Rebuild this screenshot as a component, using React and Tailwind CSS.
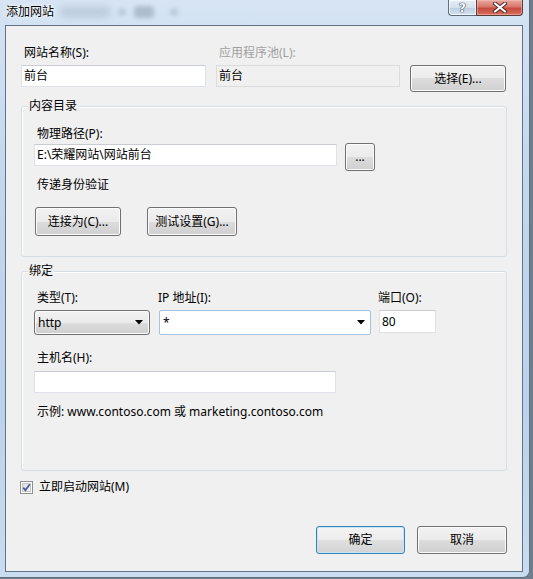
import React from "react";

function Btn({ className = "", children, primary = false }) {
  return (
    <button
      className={
        "flex items-center justify-center rounded-[3px] border text-[12px] leading-[16px] text-black " +
        (primary
          ? "border-[#3c7fb1] bg-[linear-gradient(#f4f4f4_0%,#ececec_50%,#e0e0e0_50%,#d3d3d3_100%)] shadow-[inset_0_0_0_1px_#bfe6fb] "
          : "border-[#707070] bg-[linear-gradient(#f2f2f2_0%,#ebebeb_50%,#dddddd_50%,#cfcfcf_100%)] shadow-[inset_0_0_0_1px_#fcfcfc] ") +
        className
      }
    >
      {children}
    </button>
  );
}

function Arrow() {
  return (
    <svg width="8" height="5" viewBox="0 0 8 5" className="shrink-0">
      <path d="M0 0 H8 L4 4.5 Z" fill="#000" />
    </svg>
  );
}

function Group({ title, className = "", children }) {
  return (
    <div
      className={
        "relative rounded-[3px] border border-[#d5dfe5] shadow-[inset_1px_1px_0_#ffffff] " + className
      }
    >
      <span className="absolute left-[6px] top-[-9px] bg-[#f0f0f0] px-[1px] leading-[16px]">{title}</span>
      {children}
    </div>
  );
}

const inputCls =
  "flex items-center border border-[#dfe2e8] border-t-[#c9ccd3] bg-white pl-[2px] leading-[16px]";

export default function App() {
  return (
    <div className="h-[579px] w-[533px] overflow-hidden bg-[#6f7d8c] font-['Noto_Sans','Noto_Sans_CJK_SC',sans-serif] text-[12px] leading-[16px] text-black">
      <div className="flex h-[578px] w-[530px] flex-col rounded-br-[6px] bg-[linear-gradient(180deg,#d6e4f3_0%,#c3d7ee_30%,#bcd2ea_70%,#c9dcf0_100%)] shadow-[inset_-1px_-1px_0_#5d6f84]">
        {/* Title bar */}
        <div className="relative flex h-[25px] items-start">
          <div className="pointer-events-none absolute left-[60px] top-[6px] h-[12px] w-[50px] rounded bg-[#9fb0c3] opacity-40 blur-[3px]" />
          <div className="pointer-events-none absolute left-[118px] top-[9px] h-[6px] w-[8px] rounded bg-[#8796a8] opacity-40 blur-[2px]" />
          <div className="pointer-events-none absolute left-[134px] top-[6px] h-[12px] w-[20px] rounded bg-[#8796a8] opacity-50 blur-[2px]" />
          <div className="pointer-events-none absolute left-[170px] top-[9px] h-[6px] w-[8px] rounded bg-[#8796a8] opacity-40 blur-[2px]" />
          <span className="relative pl-[6px] pt-[4px] text-[12px] leading-[16px] text-black [text-shadow:0_0_6px_#ffffff,0_0_3px_#ffffff]">
            添加网站
          </span>
          <div className="ml-auto mr-[7px] flex">
            <div className="flex h-[16px] w-[28px] items-center justify-center rounded-bl-[4px] border border-t-0 border-r-0 border-[#5e6d80] bg-[linear-gradient(180deg,#e7eef7_0%,#d3e0ee_50%,#bfd0e4_55%,#d4e2f0_100%)] shadow-[inset_0_0_0_1px_#ffffffaa]">
              <span className="font-['DejaVu_Sans',sans-serif] text-[12px] font-bold leading-[14px] text-white [text-shadow:0_0_1px_#2b3a4c,0_0_1px_#2b3a4c,0_0_1px_#2b3a4c]">
                ?
              </span>
            </div>
            <div className="flex h-[16px] w-[47px] items-center justify-center rounded-br-[4px] border border-t-0 border-[#5e3a36] bg-[linear-gradient(180deg,#e8a89e_0%,#d7776a_45%,#c6493c_55%,#d7705f_100%)] shadow-[inset_0_0_0_1px_#f3c2bb88]">
              <svg width="14" height="11" viewBox="0 0 14 11">
                <path d="M2 1.5 L12 9.5 M12 1.5 L2 9.5" stroke="#4a2a27" strokeWidth="4" strokeLinecap="round" />
                <path d="M2 1.5 L12 9.5 M12 1.5 L2 9.5" stroke="#ffffff" strokeWidth="2.2" strokeLinecap="round" />
              </svg>
            </div>
          </div>
        </div>

        {/* Client area */}
        <div className="ml-[5px] flex h-[547px] w-[518px] flex-col border border-[#61738a] bg-[#f0f0f0] pl-[15px] pr-[15px] pt-[19px]">
          {/* Row 1 */}
          <div className="flex gap-[10px]">
            <div className="w-[185px]">
              <div className="ml-[3px]">网站名称(S):</div>
              <div className={inputCls + " mt-[4px] h-[22px]"}>前台</div>
            </div>
            <div className="w-[184px]">
              <div className="ml-[3px] text-[#a0a0a0]">应用程序池(L):</div>
              <div className="mt-[4px] flex h-[22px] items-center border border-[#dcdcdc] bg-[#f0f0f0] pl-[2px]">
                前台
              </div>
            </div>
            <div className="w-[96px] pt-[20px]">
              <Btn className="h-[27px] w-[96px]">选择(E)...</Btn>
            </div>
          </div>

          {/* Group 1 */}
          <Group title="内容目录" className="mt-[14px] h-[151px] pl-[12px] pt-[19px]">
            <div className="ml-[3px]">物理路径(P):</div>
            <div className="mt-[1px] flex items-start gap-[8px]">
              <div className={inputCls + " mt-[1px] h-[22px] w-[303px]"}>E:\荣耀网站\网站前台</div>
              <Btn className="h-[28px] w-[30px] text-[10px]">...</Btn>
            </div>
            <div className="ml-[3px] mt-[6px]">传递身份验证</div>
            <div className="ml-[1px] mt-[14px] flex gap-[26px]">
              <Btn className="h-[29px] w-[86px]">连接为(C)...</Btn>
              <Btn className="h-[29px] w-[90px]">测试设置(G)...</Btn>
            </div>
          </Group>

          {/* Group 2 */}
          <Group title="绑定" className="mt-[14px] h-[200px] pl-[12px] pt-[18px]">
            <div className="flex">
              <div className="w-[116px]">
                <div className="ml-[3px]">类型(T):</div>
                <div className="mt-[4px] flex h-[25px] items-center justify-between rounded-[3px] border border-[#707070] bg-[linear-gradient(#f2f2f2_0%,#ebebeb_50%,#dddddd_50%,#cfcfcf_100%)] pl-[3px] pr-[6px] shadow-[inset_0_0_0_1px_#fcfcfc]">
                  <span>http</span>
                  <Arrow />
                </div>
              </div>
              <div className="ml-[9px] w-[212px]">
                <div className="ml-[-1px]">IP 地址(I):</div>
                <div className="mt-[4px] flex h-[25px] items-center justify-between rounded-[2px] border border-[#a7c3df] bg-white pl-[3px] pr-[5px]">
                  <span>*</span>
                  <Arrow />
                </div>
              </div>
              <div className="ml-[8px] w-[57px]">
                <div className="ml-[-1px]">端口(O):</div>
                <div className={inputCls + " mt-[4px] h-[23px]"}>80</div>
              </div>
            </div>
            <div className="ml-[3px] mt-[15px]">主机名(H):</div>
            <div className={inputCls + " mt-[5px] h-[22px] w-[302px]"}></div>
            <div className="ml-[3px] mt-[11px]">示例: www.contoso.com 或 marketing.contoso.com</div>
          </Group>

          {/* Checkbox */}
          <div className="ml-[-1px] mt-[8px] flex items-center gap-[6px]">
            <svg width="13" height="13" viewBox="0 0 13 13" className="shrink-0">
              <defs>
                <linearGradient id="cbg" x1="0" y1="0" x2="1" y2="1">
                  <stop offset="0" stopColor="#dcdcdc" />
                  <stop offset="1" stopColor="#fbfbfb" />
                </linearGradient>
              </defs>
              <rect x="0.5" y="0.5" width="12" height="12" fill="#fff" stroke="#8e8f8f" />
              <rect x="2.5" y="2.5" width="8" height="8" fill="url(#cbg)" stroke="#c6c6c6" />
              <path d="M3.2 6.6 L5.4 9.2 L9.8 3.2" fill="none" stroke="#4a5f97" strokeWidth="1.8" />
            </svg>
            <span>立即启动网站(M)</span>
          </div>

          {/* Buttons */}
          <div className="mt-[31px] flex justify-end gap-[12px]">
            <Btn primary className="h-[28px] w-[89px]">确定</Btn>
            <Btn className="h-[28px] w-[90px]">取消</Btn>
          </div>
        </div>
      </div>
    </div>
  );
}
